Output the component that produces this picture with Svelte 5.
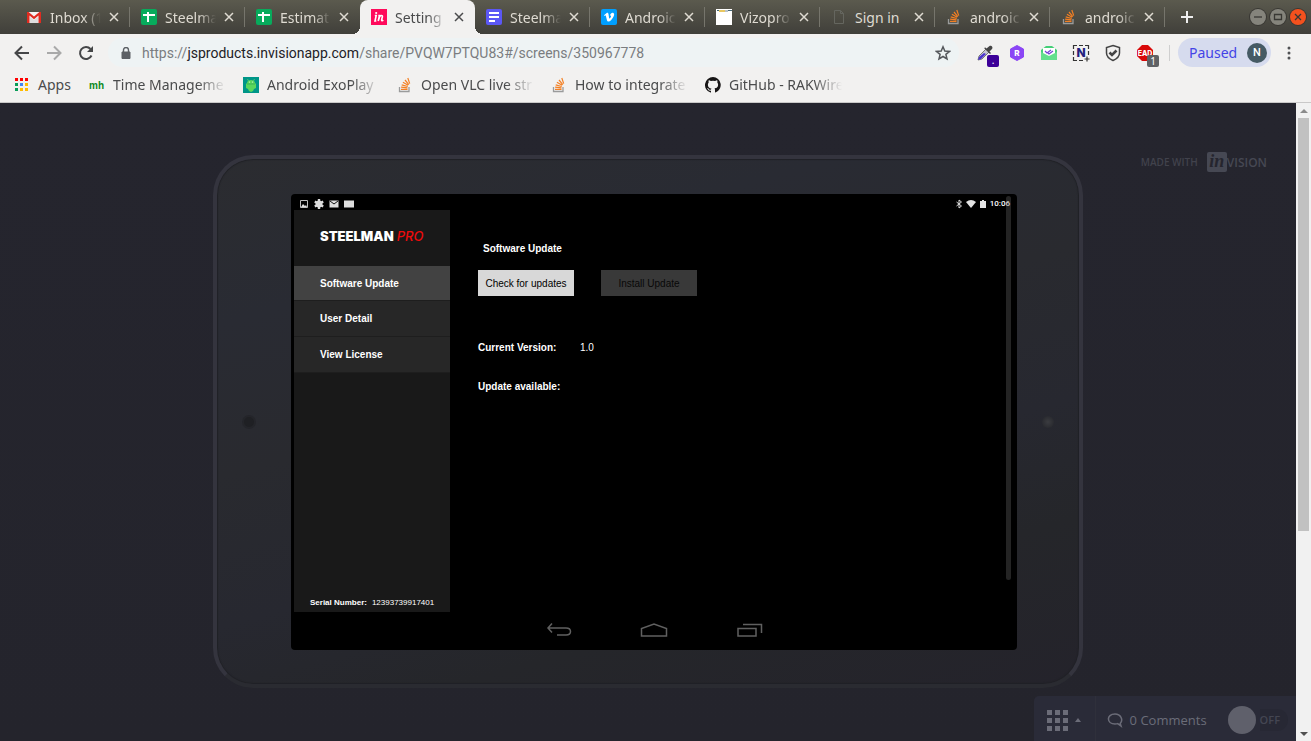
<script>
  const tabs = [
    { icon: 'gmail', title: 'Inbox (1' },
    { icon: 'sheet', title: 'Steelma' },
    { icon: 'sheet', title: 'Estimat' },
    { icon: 'invision', title: 'Setting', active: true },
    { icon: 'doc', title: 'Steelma' },
    { icon: 'vimeo', title: 'Androic' },
    { icon: 'vizo', title: 'Vizopro' },
    { icon: 'page', title: 'Sign in', whole: true },
    { icon: 'stack', title: 'androic' },
    { icon: 'stack', title: 'androic' }
  ];
  const bookmarks = [
    { icon: 'mh', title: 'Time Manageme' },
    { icon: 'exo', title: 'Android ExoPlay' },
    { icon: 'stack', title: 'Open VLC live str' },
    { icon: 'stack', title: 'How to integrate' },
    { icon: 'github', title: 'GitHub - RAKWire' }
  ];
  const extensions = ['picker', 'hex', 'mail', 'capture', 'shield', 'ear'];
  const menu = ['Software Update', 'User Detail', 'View License'];
  const cells = [0, 8, 16];
  const appColors = ['#f00', '#f00', '#f00', '#0a9d58', '#4285f4', '#fb0', '#0a9d58', '#fb0', '#fb0'];
  let comments = $state(false);
</script>

{#snippet icon(name)}
  <svg class="ico" viewBox="0 0 16 16" aria-hidden="true">
    {#if name === 'gmail'}
      <path d="M1 3h14v11H1z" fill="#f4f4f4" />
      <path d="M4 8l4 3 4-3v6H4z" fill="#ddd" />
      <path d="M1 14V3h1.600L8 7.400 13.400 3H15v11h-2.500V6.600L8 10.300 3.500 6.600V14z" fill="#e02b20" />
    {:else if name === 'sheet'}
      <rect width="16" height="16" rx="2" fill="#07ab5c" />
      <path d="M6 3h2v10H6zM2 5h12v2H2z" fill="#fff" />
    {:else if name === 'invision'}
      <rect width="16" height="16" fill="#ff0a5b" />
      <path d="M3.800 6.500h1.400L4 12h1.300M7.300 6.500h1.200L7.200 12l1.300-4c1-1.900 3.200-2.200 2.900-.2l-.8 3c-.1 1 .7 1.300 1.700.4" fill="none" stroke="#fff" stroke-width="1.600" />
      <circle cx="5.200" cy="4" r="1.100" fill="#fff" />
    {:else if name === 'doc'}
      <rect width="16" height="16" rx="2" fill="#5b57f5" />
      <path d="M3 3h10v2H3zM3 7h10v2H3zM3 11h6v2H3z" fill="#fff" />
    {:else if name === 'vimeo'}
      <rect width="16" height="16" rx="2" fill="#009fff" />
      <path d="M3 6.200 5.700 4c1-.6 1.600.1 1.800 1.100L8.100 9c.3 1 .8.600 1.300-.2.700-1 1-2 .2-2.300-.5-.1-.8.100-.8.100C9.500 4.400 10.800 3.400 12 3.700c1.700.5 1.300 2.500.3 4.200-1.400 2.400-3.200 4.700-4.700 4.700-1.200 0-1.600-1.200-1.900-2.400L4.900 7c-.2-.7-.6-.5-1.300 0z" fill="#fff" />
    {:else if name === 'vizo'}
      <path d="M0 0h16v16H0z" fill="#fff" />
      <path d="M1 1.500h2M12 1.500h4" stroke="#466a78" />
      <path d="M3 2h6" stroke="#e0b52c" stroke-width="1.500" />
      <path d="M9 2h3" stroke="#789" />
    {:else if name === 'page'}
      <path d="M3.500 1.500h6l3 3v10h-9zM9.500 1.500v3h3" fill="none" stroke="#65665f" />
    {:else if name === 'stack'}
      <path d="M2.500 10v4.500h9.500V10" fill="none" stroke="#9a9b9b" stroke-width="1.300" />
      <path d="M4 12.300h6.500M4.100 10.200l6.400.6M4.700 7.800l6 1.700M5.900 5.300l5.300 3M8 3l3.800 4.600M10.800 1l1.900 5.600" fill="none" stroke="#f48024" stroke-width="1.200" />
    {:else if name === 'exo'}
      <path d="M0 0h16v16H0z" fill="#009688" />
      <path d="M5.500 4 4.500 2M10.500 4l1-2" stroke="#6bd866" stroke-width=".7" />
      <path d="M4 6c0-4 8-4 8 0l1 1v4l-2 1-1 2-2 1-2-1-1-2-2-1V7z" fill="#5bd75b" />
      <path d="M4 7h8" stroke="#2fa557" stroke-width=".7" />
      <circle cx="6.400" cy="5" r=".5" fill="#fff" /><circle cx="9.600" cy="5" r=".5" fill="#fff" />
    {:else if name === 'github'}
      <path fill="#171515" d="M8 0a8 8 0 0 0-2.500 15.600c.4.100.5-.2.500-.4v-1.500c-2.200.5-2.700-.9-2.700-.9-.4-.9-.9-1.200-.9-1.200-.7-.5.100-.5.100-.5.800.1 1.200.8 1.200.8.700 1.200 1.900.9 2.300.7.100-.5.300-.9.500-1.100-1.800-.2-3.600-.9-3.600-4 0-.9.300-1.600.8-2.100-.1-.2-.4-1 .1-2.100 0 0 .7-.2 2.200.8a7.500 7.500 0 0 1 4 0c1.500-1 2.200-.8 2.200-.8.400 1.100.2 1.900.1 2.100.5.600.8 1.300.8 2.100 0 3.100-1.900 3.700-3.600 3.900.3.300.5.800.5 1.500v2.200c0 .2.100.5.500.4A8 8 0 0 0 8 0" />
    {/if}
  </svg>
{/snippet}

{#snippet ext(name)}
  <svg class="extico" viewBox="0 0 24 24" aria-hidden="true">
    {#if name === 'picker'}
      <path d="M5 19l1-4 7-7 3 3-7 7z" fill="#c4c4d2" stroke="#777" />
      <path d="M5 19l1-3 5-4 2 1-5 5z" fill="#4b32cf" />
      <path d="M11 7l6 6 1-1-1.500-1.500 2.500-2.500c1.500-2-1-4-2.500-3l-3 2.500-1-1z" fill="#454545" />
    {:else if name === 'hex'}
      <path d="M12 4.500l6.500 3.500v8L12 19.500 5.500 16V8z" fill="#8b46f5" stroke="#8b46f5" stroke-linejoin="round" />
      <text x="12" y="15" text-anchor="middle" class="hext">R</text>
    {:else if name === 'mail'}
      <path d="M4 9l5-4h6l5 4v9q0 1-1 1H5q-1 0-1-1z" fill="#45cf77" />
      <path d="M6 7h12v6l-6 3-6-3z" fill="#fff" />
      <path d="M4 11l8 4 8-4v7q0 1-1 1H5q-1 0-1-1z" fill="#63df8d" />
      <path d="M8 10l2 2 4-3M11 12l1 1 4-3" fill="none" stroke="#7541d5" stroke-width="1.200" />
    {:else if name === 'capture'}
      <path d="M4.500 8V4.500H8M10 4.500h4M16 4.500h3.500V8M19.500 10v4M4.500 10v4M4.500 16v3.500H8M10 19.500h4M15.500 18h5M18 15.500v5" fill="none" stroke="#333" stroke-width="1.200" />
      <text x="12" y="16" text-anchor="middle" class="capt">N</text>
    {:else if name === 'shield'}
      <path d="M12 4.500 18.500 6.500V12c0 4-3 6-6.500 7.500C8.500 18 5.500 16 5.500 12V6.500z" fill="none" stroke="#444" stroke-width="1.500" />
      <path d="M8.500 11.500l2.500 2.500 4.500-4.500" fill="none" stroke="#444" stroke-width="2.600" />
    {:else}
      <path d="M9 4h6l5 5v6l-5 5H9l-5-5V9z" fill="#d90909" />
      <text x="12" y="14.500" text-anchor="middle" class="eart">EAD</text>
    {/if}
  </svg>
{/snippet}

<div class="window">
  <header>
    <div class="strip">
      <nav class="tabs" aria-label="Tabs">
        {#each tabs as tab}
          <div class="tab" class:active={tab.active}>
            {@render icon(tab.icon)}
            <span class="title" class:whole={tab.whole}>{tab.title}</span>
            <button class="close" aria-label="Close tab">
              <svg viewBox="0 0 10 10"><path d="M1 1l8 8M9 1L1 9" /></svg>
            </button>
          </div>
        {/each}
        <button class="add" aria-label="New tab"><svg viewBox="0 0 12 12"><path d="M6 0v12M0 6h12" /></svg></button>
      </nav>
      <div class="controls">
        <button aria-label="Minimize"><svg viewBox="0 0 16 16"><path d="M4 8h8" /></svg></button>
        <button aria-label="Maximize"><svg viewBox="0 0 16 16"><path d="M4.500 5.500h7v5h-7z" /></svg></button>
        <button class="quit" aria-label="Close"><svg viewBox="0 0 16 16"><path d="M5 5l6 6M11 5l-6 6" /></svg></button>
      </div>
    </div>

    <div class="toolbar">
      <div class="history">
        <button aria-label="Back"><svg viewBox="0 0 16 16"><path d="M15 8H2M8 1.500 1.500 8 8 14.500" /></svg></button>
        <button class="dim" aria-label="Forward"><svg viewBox="0 0 16 16"><path d="M1 8h13M8 1.500 14.500 8 8 14.500" /></svg></button>
        <button aria-label="Reload"><svg viewBox="0 0 16 16"><path d="M13.500 10.500A6 6 0 1 1 12.500 4" /><path class="solid" d="M15 1v6H9z" /></svg></button>
      </div>
      <div class="address">
        <svg class="lock" viewBox="0 0 10 12"><path d="M1 5h8v6.500H1z" fill="#5c6065" stroke="#5c6065" stroke-linejoin="round" /><path d="M2.500 5V3a2.500 2.500 0 0 1 5 0v2" fill="none" stroke="#5c6065" stroke-width="1.400" /></svg>
        <a class="url" href="#share">https://<b>jsproducts.invisionapp.com</b>/share/PVQW7PTQU83#/screens/350967778</a>
        <button class="star" aria-label="Bookmark"><svg viewBox="0 0 16 16"><path d="M8 1.800 9.800 6l4.700.4-3.600 3 1.100 4.600L8 11.500 4 14l1.100-4.600-3.600-3L6.200 6z" /></svg></button>
      </div>
      <div class="exts">
        {#each extensions as name}
          <button class="ext" aria-label={name}>
            {@render ext(name)}
            {#if name === 'picker'}<span class="badge violet">.</span>{/if}
            {#if name === 'ear'}<span class="badge">1</span>{/if}
          </button>
        {/each}
      </div>
      <button class="profile">Paused <span>N</span></button>
      <button class="more" aria-label="Menu"><svg viewBox="0 0 4 14"><circle cx="2" cy="2" r="1.500" /><circle cx="2" cy="7" r="1.500" /><circle cx="2" cy="12" r="1.500" /></svg></button>
    </div>

    <nav class="bookmarks" aria-label="Bookmarks">
      <a class="apps" href="#apps">
        <svg class="ico" viewBox="0 0 16 16">
          {#each appColors as color, i}<rect x={1 + (i % 3) * 5} y={1 + Math.floor(i / 3) * 5} width="3" height="3" fill={color} />{/each}
        </svg>
        <span>Apps</span>
      </a>
      {#each bookmarks as mark}
        <a href="#bookmark">
          {#if mark.icon === 'mh'}<i class="mh">mh</i>{:else}{@render icon(mark.icon)}{/if}
          <span class="title">{mark.title}</span>
        </a>
      {/each}
    </nav>
  </header>

  <div class="page">
    <main>
      <div class="made"><span>MADE WITH</span><i>in</i><b>VISION</b></div>

      <div class="device">
        <div class="bezel left"><span class="camera"></span></div>
        <div class="screen">
          <div class="status">
            <div class="notices">
              <svg viewBox="0 0 10 10"><path d="M1.500 1.500h7v7h-7z" fill="none" stroke="#bbb" /><path d="M2 8l2-3 2 2 1-1 1 2z" fill="#ddd" /></svg>
              <svg viewBox="0 0 10 10"><path d="M5 0v10M.8 2.500l8.400 5M9.200 2.500l-8.400 5" stroke="#ddd" stroke-width="2.400" /><circle cx="5" cy="5" r="3.500" fill="#ddd" /></svg>
              <svg viewBox="0 0 10 10"><path d="M.5 1.500h9v7h-9z" fill="#ddd" /><path d="M1 2l4 3 4-3" fill="none" stroke="#111" /></svg>
              <svg viewBox="0 0 10 10"><path d="M0 1.500h10v7H0z" fill="#ddd" /></svg>
            </div>
            <div class="signals">
              <svg viewBox="0 0 10 10"><path d="M2.500 3l5 4L5 9V1l2.500 2-5 4" fill="none" stroke="#ddd" /></svg>
              <svg viewBox="0 0 10 10"><path d="M0 3q5-4 10 0L5 9z" fill="#e4e4e4" /></svg>
              <svg viewBox="0 0 10 10"><path d="M2 2h2V1h2v1h2v7H2z" fill="#e4e4e4" /></svg>
              <time>10:06</time>
            </div>
          </div>

          <div class="app">
            <aside>
              <div class="logo"><b>STEELMAN</b><i>PRO</i></div>
              <nav aria-label="Settings">
                {#each menu as item, i}
                  <a href="#settings" class:current={i === 0}>{item}</a>
                {/each}
              </nav>
              <p class="serial"><b>Serial Number:</b><span>12393739917401</span></p>
            </aside>
            <section>
              <h1>Software Update</h1>
              <div class="actions">
                <button class="check">Check for updates</button>
                <button class="install" disabled>Install Update</button>
              </div>
              <dl>
                <dt>Current Version:</dt><dd>1.0</dd>
                <dt>Update available:</dt><dd></dd>
              </dl>
            </section>
          </div>

          <div class="softkeys">
            <button aria-label="Back"><svg viewBox="0 0 28 16"><path d="M8 1.500 4 6l4 4.500M4 6h18c6 0 6 7 0 7h-9" /></svg></button>
            <button aria-label="Home"><svg viewBox="0 0 28 16"><path d="M1.500 14V6.500L14 2l12.500 4.500V14z" /></svg></button>
            <button aria-label="Recent"><svg viewBox="0 0 28 16"><path d="M2 6.500h18V14H2zM7 2.500h18.500V11" /></svg></button>
          </div>
          <span class="scrollmark"></span>
        </div>
        <div class="bezel right"><span class="sensor"></span></div>
      </div>

      <footer>
        <button class="screens" aria-label="Screens">
          <svg class="grid" viewBox="0 0 21 21">
            {#each cells as y}{#each cells as x}<rect {x} {y} width="5" height="5" />{/each}{/each}
          </svg>
          <svg class="caret" viewBox="0 0 6 4"><path d="M3 0l3 4H0z" /></svg>
        </button>
        <button class="comments">
          <svg viewBox="0 0 16 16"><path d="M13.200 11.600c3.400-4 .5-9.600-5.200-9.600C-1 2-.5 12 8 12q1.500 0 2.700-.4L14 14z" /></svg>
          0 Comments
        </button>
        <label class="switch"><input type="checkbox" bind:checked={comments} /><span class="knob"></span><span class="state">{comments ? 'ON' : 'OFF'}</span></label>
      </footer>
    </main>
    <div class="scrollbar"><span class="arrow up"></span><span class="thumb"></span><span class="arrow down"></span></div>
  </div>
</div>

<style>
  :global(body) { margin: 0; background: #24242d; }
  * { box-sizing: border-box; }
  button { border: 0; background: none; padding: 0; font: inherit; color: inherit; display: flex; align-items: center; justify-content: center; }
  a { color: inherit; text-decoration: none; }
  svg { display: block; flex: none; }
  .window { display: flex; flex-direction: column; min-height: 100vh; font-family: "Noto Sans", sans-serif; }
  header { background: #f2f1f0; color: #4a4b4c; font-size: 14px; border-bottom: 1px solid #c9c8c8; }
  .ico { width: 16px; height: 16px; }
  .title { white-space: nowrap; flex: 1; min-width: 0; mask-image: linear-gradient(90deg, #000 75%, transparent); }

  .strip { display: flex; justify-content: space-between; height: 34px; background: linear-gradient(#5b5a4e, #403f3a); color: #dfdbd2; }
  .tabs { display: flex; padding-left: 15px; min-width: 0; }
  .tab { position: relative; display: flex; align-items: center; width: 115px; min-width: 0; padding: 0 11px; gap: 8px; }
  .tab::after { content: ""; position: absolute; right: 0; top: 7px; height: 20px; width: 1px; background: #76756c; }
  .tab .title { mask-image: linear-gradient(90deg, #000 65%, transparent); }
  .tab .whole { mask-image: none; }
  .tab:has(+ .active)::after, .active::after { display: none; }
  .active { background: #f2f1f0; color: #4a4b4c; border-radius: 8px 8px 0 0; }
  .active::before { content: ""; position: absolute; left: -8px; right: -8px; bottom: 0; height: 8px; background: radial-gradient(circle at 0 0, transparent 8px, #f2f1f0 8px) left / 8px 8px no-repeat, radial-gradient(circle at 100% 0, transparent 8px, #f2f1f0 8px) right / 8px 8px no-repeat; }
  .close svg { width: 10px; height: 10px; stroke: currentColor; stroke-width: 1.5; }
  .add { width: 44px; }
  .add svg { width: 12px; height: 12px; stroke: #eee; stroke-width: 2; }
  .controls { display: flex; align-items: center; gap: 4px; padding-right: 5px; }
  .controls button { width: 16px; height: 16px; border-radius: 50%; background: #85847c; box-shadow: 0 0 0 1px #393834; }
  .controls .quit { background: #f4511e; }
  .controls svg { width: 16px; fill: none; stroke: #393834; stroke-width: 1.3; }

  .toolbar { display: flex; align-items: center; height: 37px; }
  .history { display: flex; gap: 16px; padding: 0 14px; color: #454648; }
  .history svg { width: 16px; height: 16px; fill: none; stroke: currentColor; stroke-width: 2; }
  .history .solid { fill: currentColor; stroke: none; }
  .dim { color: #a9a9a9; }
  .address { flex: 1; min-width: 0; display: flex; align-items: center; height: 29px; border-radius: 15px; background: #eef3f4; padding: 0 8px 0 13px; gap: 11px; }
  .lock { width: 10px; height: 12px; }
  .url { flex: 1; min-width: 0; overflow: hidden; white-space: nowrap; color: #7a7d80; font: 14px Roboto, sans-serif; }
  .url b { font-weight: 400; color: #222126; }
  .star svg { width: 16px; height: 16px; fill: none; stroke: #55585c; stroke-width: 1.5; }
  .exts { display: flex; gap: 8px; padding: 0 13px 0 14px; margin-right: 8px; position: relative; }
  .exts::after { content: ""; position: absolute; right: 0; top: 4px; height: 16px; width: 1px; background: #cfcfcf; }
  .ext { position: relative; }
  .extico { width: 24px; height: 24px; }
  .extico text { font-family: Inter, sans-serif; font-weight: 800; fill: #fff; }
  .extico .hext { font-size: 8px; }
  .extico .capt { font-size: 12px; fill: #21217d; }
  .extico .eart { font-size: 7px; }
  .badge { position: absolute; left: 14px; top: 14px; width: 12px; height: 12px; border-radius: 2px; background: #606265; color: #fff; font-size: 10px; line-height: 12px; text-align: center; }
  .violet { background: #3c0098; line-height: 10px; }
  .profile { width: 93px; height: 29px; border-radius: 15px; background: #d6dbee; color: #4343e6; padding: 0 4px 0 11px; justify-content: space-between; }
  .profile span { width: 20px; height: 20px; border-radius: 50%; background: #455a64; color: #fff; font: 500 11px/20px Roboto, sans-serif; text-align: center; }
  .more { width: 36px; margin-right: 4px; }
  .more svg { width: 4px; height: 14px; fill: #505154; }

  .bookmarks { display: flex; align-items: flex-start; height: 31px; padding: 0 14px; }
  .bookmarks a { display: flex; align-items: center; gap: 8px; width: 154px; padding-right: 17px; white-space: nowrap; height: 27px; }
  .bookmarks .apps { width: 75px; padding: 0; }
  .mh { width: 16px; font: 700 10px/16px "Liberation Sans", sans-serif; color: #0a8a1c; padding-top: 2px; }

  .page { flex: 1; display: flex; }
  main { flex: 1; min-width: 0; position: relative; display: flex; justify-content: center; align-items: flex-start; padding: 52px 16px; background: linear-gradient(#25252e, #24242c); }
  .made { position: absolute; top: 49px; right: 29px; display: flex; align-items: center; height: 20px; color: #41424c; font: 600 10px "Open Sans", sans-serif; }
  .made i { width: 20px; height: 20px; margin-left: 9px; border-radius: 2px; background: #464853; color: #25252e; font: italic 700 18px/18px "Liberation Serif", serif; text-align: center; }
  .made b { font: 600 12px "Open Sans", sans-serif; color: #464853; }
  .device { display: flex; width: 870px; padding: 35px 0 34px; border: 4px solid #34343e; border-bottom-color: #2a2b31; border-radius: 40px; background: linear-gradient(165deg, #2b2c30 0%, #292b33 22%, #292a2f 42%, #272830 62%, #25262a 78%, #24232b 100%); box-shadow: inset 0 0 1px 1px #202126; }
  .bezel { display: flex; align-items: center; justify-content: center; }
  .left { width: 74px; padding-right: 10px; }
  .right { width: 62px; }
  .camera { width: 14px; height: 14px; border-radius: 50%; background: #1f2024; border: 2px solid #24252a; }
  .sensor { width: 12px; height: 12px; border-radius: 50%; background: radial-gradient(#3b3c40, #2a2b30 70%); }
  .screen { position: relative; flex: 1; min-width: 0; background: #000; border-radius: 4px; color: #fff; font: 10px "Liberation Sans", sans-serif; }
  .status { display: flex; justify-content: space-between; padding: 3px 7px 0 8px; height: 16px; }
  .status svg { width: 10px; height: 10px; }
  .notices { display: flex; gap: 5px; padding-top: 2px; }
  .signals { display: flex; gap: 2px; padding-top: 2px; }
  .signals time { font: 500 8px/10px Roboto, sans-serif; }
  .app { display: flex; min-height: 402px; padding-left: 3px; }
  aside { width: 156px; display: flex; flex-direction: column; background: #191919; }
  .logo { height: 56px; padding: 18px 0 0 26px; display: flex; gap: 3px; }
  .logo b { font: 900 13px/16px Inter, sans-serif; }
  .logo i { font: italic 500 13px/16px Inter, sans-serif; color: #ec0b0b; }
  aside nav { font-weight: 700; }
  aside nav a { display: flex; align-items: center; height: 36px; padding-left: 26px; background: #272727; border-bottom: 1px solid #1e1e1e; }
  aside nav .current { background: #424242; height: 35px; }
  .serial { display: flex; gap: 5px; margin: auto 0 0; padding: 0 16px 4px; font-size: 8px; line-height: 10px; white-space: nowrap; }
  section { flex: 1; padding: 32px 28px; }
  h1 { margin: 0; padding-left: 5px; font-size: 10px; line-height: 14px; }
  .actions { display: flex; gap: 27px; margin-top: 14px; }
  .actions button { width: 96px; height: 26px; font-size: 10px; white-space: nowrap; }
  .check { background: #d8d8d8; color: #000; }
  .install { background: #393939; color: #080808; }
  dl { display: grid; grid-template-columns: 102px 1fr; row-gap: 25px; margin: 45px 0 0; line-height: 14px; }
  dt { font-weight: 700; }
  dd { margin: 0; }
  .softkeys { display: flex; justify-content: center; gap: 68px; height: 38px; padding-bottom: 2px; }
  .softkeys svg { width: 28px; height: 16px; fill: none; stroke: #606060; stroke-width: 1.5; }
  .scrollmark { position: absolute; top: 2px; right: 6px; width: 5px; height: 384px; border-radius: 3px; background: #70707052; }

  footer { position: absolute; right: 0; bottom: 0; display: flex; height: 45px; border-radius: 5px 0 0 0; background: #2a2b38; color: #6b6d79; font: 13px "Open Sans", sans-serif; }
  .screens { width: 62px; gap: 7px; border-right: 1px solid #2f303b; padding-top: 3px; }
  .grid { width: 21px; height: 21px; fill: #6b6c78; }
  .caret { width: 6px; height: 4px; fill: #6b6c78; }
  .comments { gap: 7px; padding: 3px 10px 0 11px; }
  .comments svg { width: 16px; height: 16px; fill: none; stroke: #6b6c78; stroke-width: 1.5; }
  .switch { display: flex; align-items: center; gap: 4px; padding: 3px 16px 0 11px; font-size: 11px; font-weight: 600; color: #444652; }
  .switch input { position: absolute; opacity: 0; }
  .knob { width: 28px; height: 28px; border-radius: 50%; background: #5f606b; }
  .state { padding-right: 8px; margin-right: -8px; border-radius: 0 11px 11px 0; background: #272834; line-height: 22px; }

  .scrollbar { width: 15px; background: #f1f1f1; display: flex; flex-direction: column; align-items: center; }
  .thumb { width: 11px; flex: 0 1 413px; background: #c1c1c1; margin-bottom: auto; }
  .arrow { width: 15px; height: 15px; flex: none; display: flex; align-items: center; justify-content: center; }
  .arrow::before { content: ""; border: 4px solid transparent; }
  .up::before { border-top: 0; border-bottom-color: #8b8b8b; }
  .down::before { border-bottom: 0; border-top-color: #505050; }
</style>
